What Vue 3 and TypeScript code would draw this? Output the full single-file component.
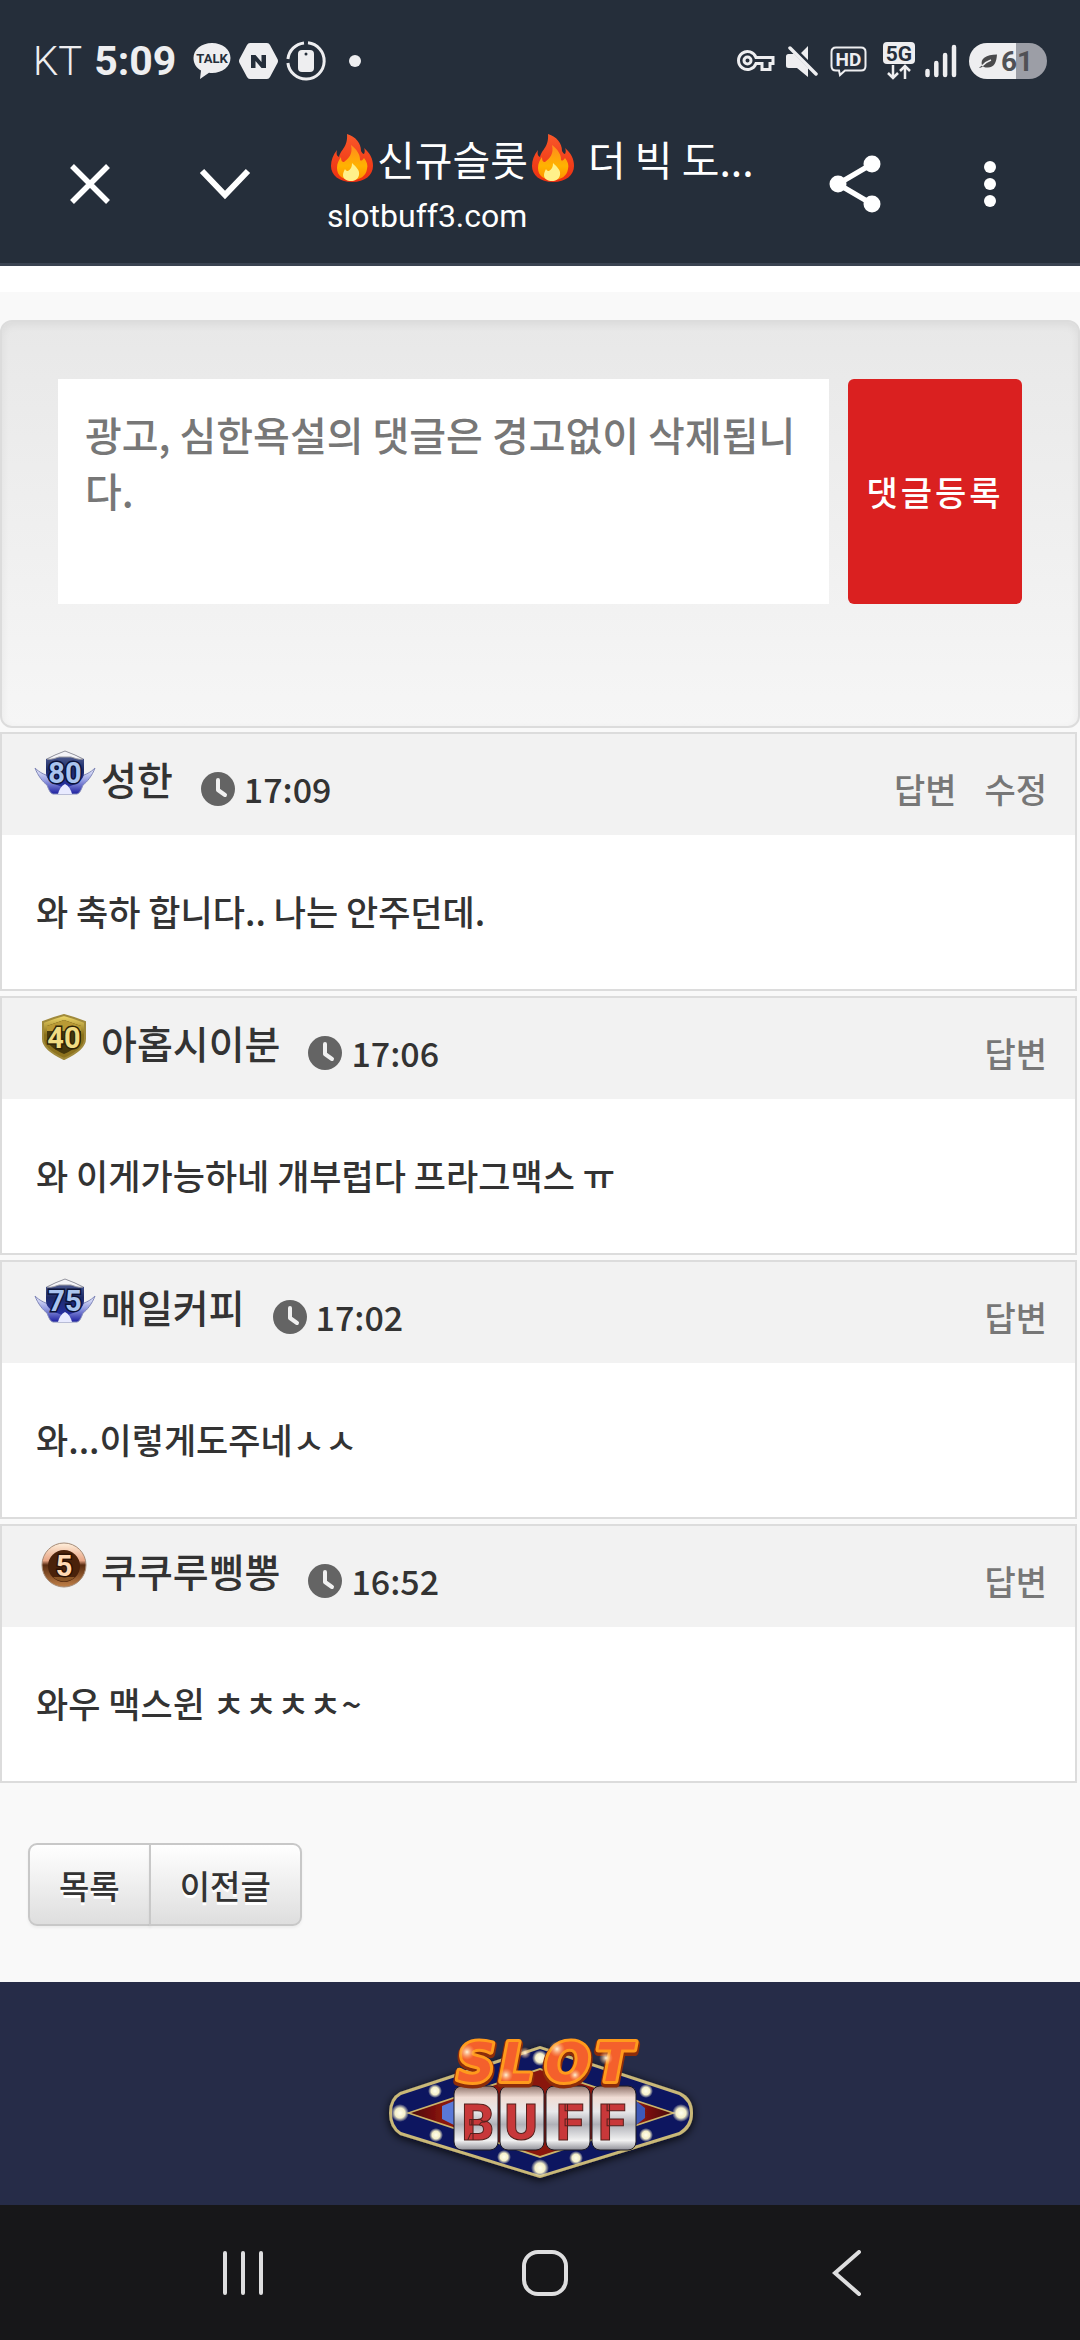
<script setup lang="ts">
import { ref } from 'vue'

type BadgeKind = 'wing' | 'gold' | 'bronze'

interface Comment {
  id: number
  level: string
  badge: BadgeKind
  name: string
  time: string
  text: string
  actions: string[]
}

const draft = ref('')

const comments: Comment[] = [
  { id: 1, level: '80', badge: 'wing', name: '성한', time: '17:09', text: '와 축하 합니다.. 나는 안주던데.', actions: ['답변', '수정'] },
  { id: 2, level: '40', badge: 'gold', name: '아홉시이분', time: '17:06', text: '와 이게가능하네 개부럽다 프라그맥스 ㅠ', actions: ['답변'] },
  { id: 3, level: '75', badge: 'wing', name: '매일커피', time: '17:02', text: '와...이렇게도주네ㅅㅅ', actions: ['답변'] },
  { id: 4, level: '5', badge: 'bronze', name: '쿠쿠루삥뽕', time: '16:52', text: '와우 맥스윈 ㅊㅊㅊㅊ~', actions: ['답변'] },
]

const bulbs = [
  { x: 65, y: 81, r: 5 }, { x: 276, y: 81, r: 5 }, { x: 30, y: 103, r: 7 }, { x: 311, y: 103, r: 7 },
  { x: 66, y: 125, r: 5 }, { x: 276, y: 125, r: 5 }, { x: 134, y: 147, r: 5 }, { x: 206, y: 148, r: 5 },
  { x: 170, y: 158, r: 7 }, { x: 170, y: 48, r: 6 },
]

const reels = [
  { x: 84, w: 44, cx: 108, letter: 'B' },
  { x: 130, w: 44, cx: 151, letter: 'U' },
  { x: 176, w: 44, cx: 200, letter: 'F' },
  { x: 222, w: 44, cx: 242, letter: 'F' },
]
</script>

<template>
  <div class="screen">
    <svg class="defs" aria-hidden="true">
      <defs>
        <linearGradient id="flameOuter" x1="0" y1="0" x2="0" y2="1">
          <stop offset="0" stop-color="#f9582a" /><stop offset="1" stop-color="#ec2f10" />
        </linearGradient>
        <linearGradient id="flameInner" x1="0" y1="0" x2="0" y2="1">
          <stop offset="0" stop-color="#ff8a1e" /><stop offset="0.6" stop-color="#ffb300" /><stop offset="1" stop-color="#ff9100" />
        </linearGradient>
        <linearGradient id="blueShield" x1="0" y1="0" x2="0" y2="1">
          <stop offset="0" stop-color="#5e6ca0" /><stop offset="0.5" stop-color="#1c2a66" /><stop offset="1" stop-color="#2730a8" />
        </linearGradient>
        <linearGradient id="blueWing" x1="0" y1="0" x2="0" y2="1">
          <stop offset="0" stop-color="#f4f6ff" /><stop offset="0.5" stop-color="#9098e0" /><stop offset="1" stop-color="#1d1fa0" />
        </linearGradient>
        <linearGradient id="goldShield" x1="0" y1="0" x2="0" y2="1">
          <stop offset="0" stop-color="#f3dc6c" /><stop offset="0.45" stop-color="#8a701a" /><stop offset="1" stop-color="#8f7420" />
        </linearGradient>
        <linearGradient id="bronzeCoin" x1="0" y1="0" x2="0" y2="1">
          <stop offset="0" stop-color="#fff0dc" /><stop offset="0.4" stop-color="#e8a585" /><stop offset="0.5" stop-color="#5a2c10" /><stop offset="1" stop-color="#c08048" />
        </linearGradient>
        <linearGradient id="reel" x1="0" y1="0" x2="0" y2="1">
          <stop offset="0" stop-color="#8d7068" /><stop offset="0.18" stop-color="#f0dcd4" /><stop offset="0.4" stop-color="#e8e8ea" />
          <stop offset="0.6" stop-color="#b0b1b8" /><stop offset="0.85" stop-color="#f2f2f2" /><stop offset="1" stop-color="#909098" />
        </linearGradient>
        <linearGradient id="redField" x1="0" y1="0" x2="1" y2="0">
          <stop offset="0" stop-color="#4a0806" /><stop offset="0.12" stop-color="#8a1410" /><stop offset="0.88" stop-color="#8a1410" /><stop offset="1" stop-color="#4a0806" />
        </linearGradient>
        <radialGradient id="glow">
          <stop offset="0" stop-color="#fffef0" /><stop offset="0.55" stop-color="#f4efc8" /><stop offset="1" stop-color="#f4efc8" stop-opacity="0" />
        </radialGradient>
        <radialGradient id="sparkle">
          <stop offset="0" stop-color="#fff4d8" /><stop offset="1" stop-color="#ffb070" stop-opacity="0" />
        </radialGradient>
        <filter id="logoShadow" x="-10%" y="-10%" width="120%" height="125%">
          <feDropShadow dx="0" dy="2" stdDeviation="5" flood-color="#05060c" flood-opacity="0.9" />
        </filter>
      </defs>
    </svg>

    <header class="chrome">
      <div class="status">
        <div class="status-left">
          <span class="carrier">KT</span>
          <span class="clock">5:09</span>
          <svg class="talk" width="38" height="36" viewBox="0 0 38 36" role="img" aria-label="TALK">
            <path d="M19 0C8.500 0 .5 6.500.5 15c0 5.500 3 10 7.500 12.500L7 36l9-6.200c1 .2 2 .2 3 .2 10.500 0 18.500-6.500 18.500-15S29.500 0 19 0z" fill="#eeeef0" />
            <text x="19" y="20" text-anchor="middle" font-size="13" font-weight="700" fill="#252e3a">TALK</text>
          </svg>
          <svg class="hex" width="39" height="36" viewBox="0 0 39 36" aria-hidden="true">
            <path d="M11 0h17q2 0 3 2l7.500 14q1 2 0 4L31 34q-1 2-3 2H11q-2 0-3-2L.5 20q-1-2 0-4L8 2q1-2 3-2z" fill="#eeeef0" />
            <path d="M12 25V12h4.500l6 7v-7H27v13h-4.500l-6-7v7z" fill="#252e3a" />
          </svg>
          <svg class="ring" width="40" height="40" viewBox="0 0 40 40" aria-hidden="true">
            <path d="M22 1.800A18.200 18.200 0 1 1 1.900 22M1.900 18A18.200 18.200 0 0 1 18 1.900" fill="none" stroke="#eeeef0" stroke-width="3" />
            <rect x="12" y="9" width="16" height="22" rx="4" fill="#eeeef0" />
            <circle cx="20" cy="13" r="1.500" fill="#252e3a" />
          </svg>
          <span class="more-dot"></span>
        </div>
        <div class="status-right">
          <svg class="key" width="38" height="24" viewBox="0 0 38 24" fill="none" stroke="#eeeef0" stroke-width="3" aria-hidden="true">
            <path d="M19 8.500H36v6h-3v6h-8v-6h-6a9 9 0 1 1 0-6z" />
            <circle cx="10.500" cy="11.500" r="3.500" />
          </svg>
          <svg class="mute" width="33" height="33" viewBox="0 0 33 33" aria-hidden="true">
            <path d="M3.500 9H9l14 14v9L12 23H3.500Q1 23 1 20.500v-9Q1 9 3.500 9zM23 1v14l-7-7z" fill="#eeeef0" />
            <path d="M5 3l26 26" stroke="#eeeef0" stroke-width="3.500" stroke-linecap="round" />
          </svg>
          <svg class="hd" width="37" height="31" viewBox="0 0 37 31" aria-hidden="true">
            <path d="M6 1.500h25q4.500 0 4.500 4.500v14q0 4.500-4.500 4.500H15L10 29l-1-4.500H6q-4.500 0-4.500-4.500V6Q1.500 1.500 6 1.500z" fill="none" stroke="#eeeef0" stroke-width="2" />
            <text x="18.500" y="20" text-anchor="middle" font-size="19" font-weight="700" fill="#eeeef0">HD</text>
          </svg>
          <svg class="fiveg" width="32" height="38" viewBox="0 0 32 38" aria-hidden="true">
            <rect width="32" height="22" rx="4" fill="#eeeef0" />
            <text x="16" y="18.500" text-anchor="middle" font-size="21" font-weight="700" fill="#252e3a">5G</text>
            <path d="M10 23v13M5 31l5 5 5-5M22 37V24M17 29l5-5 5 5" fill="none" stroke="#eeeef0" stroke-width="2.500" />
          </svg>
          <svg class="bars" width="32" height="34" viewBox="0 0 32 34" stroke="#eeeef0" stroke-width="4.500" stroke-linecap="round" aria-hidden="true">
            <path d="M2.500 27v4M11.300 19v12M20.100 11v20M29 3v28" />
          </svg>
          <svg class="battery" width="78" height="36" viewBox="0 0 78 36" role="img" aria-label="61%">
            <path d="M47 0h13a18 18 0 0 1 0 36H47z" fill="#9c9ea6" />
            <path d="M47 0H18a18 18 0 0 0 0 36h29z" fill="#eeeef0" />
            <path d="M10 25c1.500-1.500 2-2 3-2.500-2-7 4-11 15-11-.5 8-3 13.500-10 13-2 0-3-.5-4-1-1.500.5-2.500 1.500-4 1.500z" fill="#4a4a4c" />
            <path d="M13 23c3-3 6-5 9-6" stroke="#eeeef0" stroke-width="1.500" fill="none" />
            <text x="48" y="28" text-anchor="middle" font-size="28" font-weight="700" fill="#505155">61</text>
          </svg>
        </div>
      </div>

      <div class="toolbar">
        <button class="tool" type="button" aria-label="닫기">
          <svg width="42" height="42" viewBox="0 0 42 42" stroke="#fff" stroke-width="5.500"><path d="M3 3l36 36M39 3L3 39" /></svg>
        </button>
        <button class="tool" type="button" aria-label="최소화">
          <svg width="52" height="32" viewBox="0 0 52 32" stroke="#fff" stroke-width="6" fill="none"><path d="M3 3l23 24L49 3" /></svg>
        </button>
        <div class="page-info">
          <h1 class="page-title">
            <svg class="flame" width="50" height="48" viewBox="0 0 50 48" role="img" aria-label="🔥">
              <path d="M20 0c9 3 14 9 14 17 1 2 2 3 3 3 1-2 1-4 0-6 6 5 9 11 9 18 0 9-8 16-21 16S4 41 4 32c0-6 2-11 6-16-1 4 0 6 2 7 2-8 9-10 8-23z" fill="url(#flameOuter)" />
              <path d="M24 11c6 5 9 9 9 15 1 1 2 1 4-2 3 4 4 7 3 11-1 7-7 11-15 11-9 0-15-4-15-12 0-5 2-8 4-11 0 4 1 5 3 5 5-4 9-8 7-17z" fill="url(#flameInner)" />
              <path d="M25 29c4 4 8 7 7 12-1 4-4 6-8 6-4 0-8-2-8-6 0-2 1-4 2-6 1 2 2 2 3 2 3-2 4-4 4-8z" fill="#fff08a" />
            </svg>
            <span>신규슬롯</span>
            <svg class="flame" width="50" height="48" viewBox="0 0 50 48" role="img" aria-label="🔥">
              <path d="M20 0c9 3 14 9 14 17 1 2 2 3 3 3 1-2 1-4 0-6 6 5 9 11 9 18 0 9-8 16-21 16S4 41 4 32c0-6 2-11 6-16-1 4 0 6 2 7 2-8 9-10 8-23z" fill="url(#flameOuter)" />
              <path d="M24 11c6 5 9 9 9 15 1 1 2 1 4-2 3 4 4 7 3 11-1 7-7 11-15 11-9 0-15-4-15-12 0-5 2-8 4-11 0 4 1 5 3 5 5-4 9-8 7-17z" fill="url(#flameInner)" />
              <path d="M25 29c4 4 8 7 7 12-1 4-4 6-8 6-4 0-8-2-8-6 0-2 1-4 2-6 1 2 2 2 3 2 3-2 4-4 4-8z" fill="#fff08a" />
            </svg>
            <span class="title-rest">더 빅 도...</span>
          </h1>
          <p class="page-url">slotbuff3.com</p>
        </div>
        <button class="tool" type="button" aria-label="공유">
          <svg width="52" height="58" viewBox="0 0 52 58" fill="#fff">
            <path d="M43 9L9 29l34 20" fill="none" stroke="#fff" stroke-width="5.500" />
            <circle cx="43" cy="9" r="8.500" /><circle cx="9" cy="29" r="8.500" /><circle cx="43" cy="49" r="8.500" />
          </svg>
        </button>
        <button class="tool" type="button" aria-label="더보기">
          <svg width="12" height="48" viewBox="0 0 12 48" fill="#fff"><circle cx="6" cy="7" r="6" /><circle cx="6" cy="24" r="6" /><circle cx="6" cy="41" r="6" /></svg>
        </button>
      </div>
    </header>

    <main class="page">
      <form class="write" @submit.prevent>
        <textarea v-model="draft" class="write-box" aria-label="댓글 내용" placeholder="광고, 심한욕설의 댓글은 경고없이 삭제됩니다."></textarea>
        <button class="write-submit" type="submit">댓글등록</button>
      </form>

      <section class="comments">
        <article v-for="c in comments" :key="c.id" class="comment">
          <header class="comment-head">
            <svg class="badge" width="62" height="46" viewBox="0 0 62 46" role="img" :aria-label="c.level">
              <g v-if="c.badge === 'wing'">
                <path d="M1 18c5 5 9 6 13 8 4 7 10 9 17 9s13-2 17-9c4-2 8-3 13-8-3 8-8 14-12 17-2 5-3 8-6 9H19c-3-1-4-4-6-9C9 32 4 26 1 18z" fill="url(#blueWing)" stroke="#7f86b8" />
                <path d="M12 9l9-4 10-4 10 4 9 4v14c0 7-7 11-19 15-12-4-19-8-19-15z" fill="url(#blueShield)" />
                <path d="M13 9l8-4 10-4 10 4 8 4c-5 1-8-1-12-2h-12c-4 1-7 3-12 2z" fill="#f4f4f8" stroke="#9a9aa2" />
                <path d="M31 34c4 2 6 6 7 10H24c1-4 3-8 7-10z" fill="#e8eaff" />
                <text class="badge-num blue" x="31" y="33" text-anchor="middle">{{ c.level }}</text>
              </g>
              <g v-else-if="c.badge === 'gold'">
                <path d="M9 8l11-4 10-3 10 3 11 4v17c0 8-8 14-21 20C17 39 9 33 9 25z" fill="url(#goldShield)" stroke="#a08a3c" stroke-width="2" />
                <path d="M13 12l17-6 17 6v13c0 5-6 10-17 15-11-5-17-10-17-15z" fill="#46380c" />
                <path d="M13 12l17-6 17 6v5H13z" fill="#b99a35" />
                <text class="badge-num gold" x="30" y="34" text-anchor="middle">{{ c.level }}</text>
              </g>
              <g v-else>
                <circle cx="30" cy="23" r="22" fill="url(#bronzeCoin)" stroke="#a58c78" />
                <circle cx="30" cy="24" r="16" fill="#4a220a" />
                <path d="M19 35a16 16 0 0 0 22 0z" fill="#8a5526" />
                <text class="badge-num bronze" x="30" y="34" text-anchor="middle">{{ c.level }}</text>
              </g>
            </svg>
            <strong class="name">{{ c.name }}</strong>
            <span class="when">
              <svg width="34" height="34" viewBox="0 0 34 34" aria-hidden="true">
                <circle cx="17" cy="17" r="17" fill="#646464" />
                <path d="M17 8v10l7 5" fill="none" stroke="#f0f0f0" stroke-width="4" stroke-linecap="round" stroke-linejoin="round" />
              </svg>
              <time>{{ c.time }}</time>
            </span>
            <nav class="actions">
              <a v-for="a in c.actions" :key="a" href="#">{{ a }}</a>
            </nav>
          </header>
          <p class="comment-text">{{ c.text }}</p>
        </article>
      </section>

      <div class="post-nav">
        <button type="button">목록</button>
        <button type="button">이전글</button>
      </div>
    </main>

    <footer class="footer">
      <svg width="340" height="195" viewBox="0 0 340 195" role="img" aria-label="SLOT BUFF">
        <g filter="url(#logoShadow)">
          <path d="M170 36L310 82q13 6 13 21t-13 22L170 168 30 125q-11-7-11-22t11-21z" fill="#c9b878" />
          <path d="M170 39L309 85q11 6 11 18t-11 19L170 165 31 122q-9-6-9-19t9-18z" fill="#0f1660" />
          <path d="M170 58L306 103 170 148 36 103z" fill="#cbb46a" />
          <path d="M170 60L301 103 170 146 41 103z" fill="url(#redField)" />
        </g>
        <path d="M72 96l12-5v24l-12-6z" fill="#5a78d8" /><path d="M275 98l-9-7v24l9-7z" fill="#3d58b8" />
        <circle v-for="(b, i) in bulbs" :key="i" :cx="b.x" :cy="b.y" :r="b.r + 2" fill="url(#glow)" />
        <g v-for="r in reels" :key="r.x">
          <rect :x="r.x" y="76" :width="r.w" height="64" rx="8" fill="url(#reel)" stroke="#1d1a22" />
          <text class="reel-letter" :x="r.cx" y="130" text-anchor="middle">{{ r.letter }}</text>
        </g>
        <text class="slot-back" x="87 130 175 226" y="73">SLOT</text>
        <text class="slot-front" x="87 130 175 226" y="71">SLOT</text>
        <circle cx="97" cy="42" r="8" fill="url(#sparkle)" /><circle cx="187" cy="39" r="8" fill="url(#sparkle)" />
        <circle cx="136" cy="65" r="7" fill="url(#sparkle)" /><circle cx="236" cy="48" r="7" fill="url(#sparkle)" />
        <circle cx="205" cy="65" r="6" fill="url(#sparkle)" /><circle cx="155" cy="43" r="6" fill="url(#sparkle)" />
      </svg>
    </footer>

    <nav class="system-nav">
      <button type="button" aria-label="최근 앱">
        <svg width="42" height="46" viewBox="0 0 42 46" stroke="#dededf" stroke-width="4" stroke-linecap="round"><path d="M3 3v40M21 3v40M39 3v40" /></svg>
      </button>
      <button type="button" aria-label="홈">
        <svg width="46" height="46" viewBox="0 0 46 46" fill="none" stroke="#dededf" stroke-width="4"><rect x="2" y="2" width="42" height="42" rx="14" /></svg>
      </button>
      <button type="button" aria-label="뒤로">
        <svg width="30" height="46" viewBox="0 0 30 46" fill="none" stroke="#dededf" stroke-width="4" stroke-linecap="round"><path d="M27 2L3 23l24 21" /></svg>
      </button>
    </nav>
  </div>
</template>

<style>
body {
  background: #f9f9f9;
}
</style>

<style scoped>
.screen {
  display: flex;
  flex-direction: column;
  min-height: 100vh;
  font-family: "Noto Sans CJK KR", "Noto Sans", sans-serif;
  font-weight: 500;
  color: #333;
  background: #f9f9f9;
}
.screen * {
  box-sizing: border-box;
}
.defs {
  position: absolute;
  width: 0;
  height: 0;
}
svg {
  display: block;
  flex: none;
}
button {
  margin: 0;
  padding: 0;
  border: 0;
  background: none;
  font: inherit;
  color: inherit;
  cursor: pointer;
}

/* status bar and browser toolbar */
.chrome {
  background: #252e3a;
  border-bottom: 3px solid #3a4351;
  color: #fff;
}
.status {
  display: flex;
  justify-content: space-between;
  align-items: center;
  height: 122px;
  padding: 0 33px;
  font-family: Roboto, "Noto Sans", sans-serif;
  color: #eeeef0;
}
.status-left,
.status-right {
  display: flex;
  align-items: center;
}
.carrier {
  font-size: 40px;
  font-weight: 300;
}
.clock {
  margin-left: 12px;
  font-size: 41px;
  font-weight: 700;
}
.talk {
  margin-left: 17px;
}
.hex,
.ring {
  margin-left: 8px;
}
.more-dot {
  width: 12px;
  height: 12px;
  margin-left: 23px;
  border-radius: 50%;
  background: #eeeef0;
}
.hd,
.battery {
  margin-left: 12px;
}
.mute,
.bars {
  margin-left: 10px;
}
.fiveg {
  margin-left: 16px;
}
.toolbar {
  display: flex;
  align-items: flex-start;
  gap: 15px;
  padding: 0 30px 17px;
}
.tool {
  display: flex;
  flex: none;
  align-items: center;
  justify-content: center;
  width: 120px;
  height: 124px;
}
.page-info {
  flex: 1;
  min-width: 0;
  padding: 6px 0 0 27px;
}
.page-title {
  display: flex;
  align-items: center;
  margin: 0;
  font-size: 41px;
  font-weight: 400;
  line-height: 60px;
  white-space: nowrap;
}
.title-rest {
  margin-left: 10px;
}
.page-url {
  margin: 0;
  font-family: Roboto, "Noto Sans", sans-serif;
  font-size: 32px;
  font-weight: 400;
  line-height: 56px;
}

/* comment form */
.page {
  flex: 1;
  border-top: 26px solid #fff;
  padding-top: 28px;
}
.write {
  display: flex;
  align-items: flex-start;
  gap: 19px;
  padding: 57px 56px 122px;
  border: 2px solid #dcdcdc;
  border-radius: 12px;
  background: linear-gradient(#e8e8e8, #f6f6f6);
  box-shadow: inset 0 3px 9px rgba(0, 0, 0, 0.06);
}
.write-box {
  flex: 1;
  min-width: 0;
  height: 225px;
  padding: 27px;
  border: 0;
  background: #fff;
  font: inherit;
  font-size: 40px;
  line-height: 56px;
  color: #333;
  resize: none;
  outline: none;
}
.write-box::placeholder {
  color: #777;
}
.write-submit {
  width: 174px;
  height: 225px;
  border-radius: 6px;
  background: #da2020;
  font-size: 34px;
  letter-spacing: 3px;
  color: #fff;
}

/* comment list */
.comments {
  display: flex;
  flex-direction: column;
  gap: 5px;
  padding: 4px 3px 0 0;
}
.comment {
  border: 2px solid #dcdcdc;
  background: #fff;
}
.comment-head {
  display: flex;
  align-items: flex-start;
  height: 101px;
  padding: 16px 28px 0 32px;
  background: #f2f2f2;
}
.name {
  margin-left: 5px;
  font-size: 39px;
  font-weight: 500;
  line-height: 56px;
}
.when {
  display: flex;
  align-items: center;
  gap: 9px;
  margin: 11px 0 0 28px;
  font-size: 34px;
  line-height: 56px;
}
.actions {
  display: flex;
  gap: 28px;
  margin: 11px 0 0 auto;
  font-size: 34px;
  line-height: 56px;
}
.actions a {
  color: #777;
  text-decoration: none;
}
.comment-text {
  margin: 0;
  padding: 48px 34px 50px;
  font-size: 35px;
  line-height: 56px;
}
.badge-num {
  font-family: Roboto, sans-serif;
  font-size: 29px;
  font-weight: 700;
  paint-order: stroke;
  stroke-width: 3px;
}
.badge-num.blue {
  fill: #a9c4ee;
  stroke: #0a1238;
}
.badge-num.gold {
  fill: #f0dc84;
  stroke: #2e2406;
}
.badge-num.bronze {
  fill: #ffd9b4;
  stroke: #2c1204;
}

/* post navigation */
.post-nav {
  display: flex;
  padding: 60px 28px 56px;
}
.post-nav button {
  height: 83px;
  padding: 0 29px;
  border: 2px solid #c8c8c8;
  background: linear-gradient(#fff, #dedede);
  box-shadow: 0 2px 3px rgba(0, 0, 0, 0.05);
  font-size: 33px;
  text-shadow: 0 3px 0 #fff;
}
.post-nav button:first-child {
  border-radius: 9px 0 0 9px;
}
.post-nav button:last-child {
  margin-left: -2px;
  border-radius: 0 9px 9px 0;
}

/* footer */
.footer {
  display: flex;
  justify-content: center;
  padding-top: 28px;
  background: #262c48;
}
.reel-letter {
  font-family: Roboto, sans-serif;
  font-size: 50px;
  font-weight: 900;
  fill: #c8383a;
  stroke: #54201c;
  stroke-width: 1px;
}
.slot-back,
.slot-front {
  font-family: "DejaVu Sans", sans-serif;
  font-size: 53px;
  font-weight: 700;
  font-style: italic;
  paint-order: stroke;
  stroke-linejoin: round;
}
.slot-back {
  fill: #6d1f08;
  stroke: #8c2c0a;
  stroke-width: 9px;
}
.slot-front {
  fill: #f4602c;
  stroke: #ff9a1c;
  stroke-width: 6px;
}

/* system navigation */
.system-nav {
  display: grid;
  grid-template-columns: repeat(3, 1fr);
  padding: 0 82px 0 92px;
  background: #171719;
}
.system-nav button {
  display: flex;
  align-items: center;
  justify-content: center;
  height: 135px;
}
</style>
